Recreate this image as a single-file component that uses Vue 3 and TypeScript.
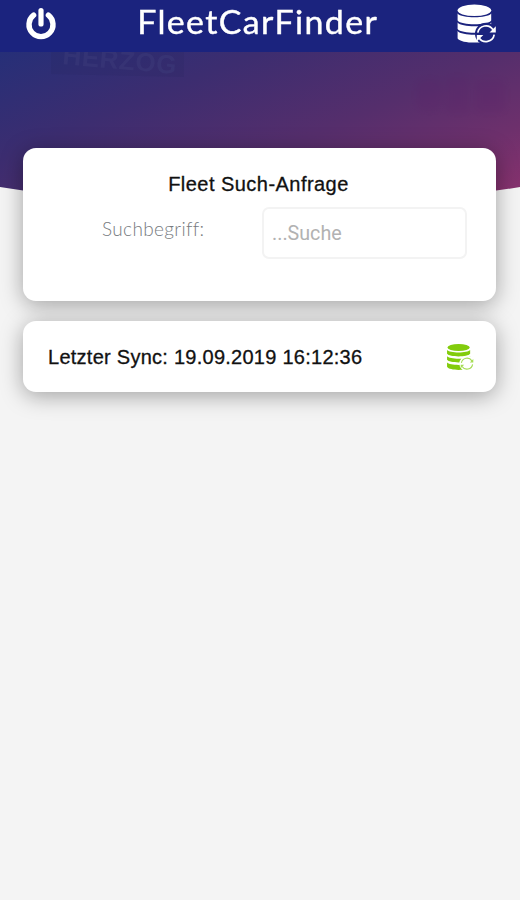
<script setup lang="ts">
import { ref } from 'vue'

const query = ref('')
const lastSync = '19.09.2019 16:12:36'
</script>

<template>
  <div class="screen">
    <header class="bar">
      <button class="icon-btn" aria-label="Abmelden">
        <svg class="power" viewBox="0 0 32 34" fill="none" stroke="#fff" stroke-linecap="round">
          <path d="M16 4.5V18" stroke-width="5.2" />
          <path d="M8.6 9.2A12 12 0 1 0 23.4 9.2" stroke-width="5.4" />
        </svg>
      </button>
      <h1 class="title">FleetCarFinder</h1>
      <button class="icon-btn" aria-label="Synchronisieren">
        <svg class="db" viewBox="0 0 40 40">
          <g fill="#fff">
            <ellipse cx="17.4" cy="6.3" rx="16.8" ry="5.8" />
            <path d="M.6 9.6C4.4 14.6 30.4 14.6 34.2 9.6V16.4C30.4 21.4 4.4 21.4 .6 16.4Z" />
            <path d="M.6 18.5C4.4 23.5 30.4 23.5 34.2 18.5V25C30.4 30 4.4 30 .6 25Z" />
            <path d="M.6 27C4.4 32 30.4 32 34.2 27V34.4C30.4 40 4.4 40 .6 34.4Z" />
          </g>
          <circle cx="29" cy="29.7" r="11" fill="#1b237e" />
          <g fill="none" stroke="#fff" stroke-width="1.7">
            <path d="M20.8 28.7A8.3 8.3 0 0 1 36 25.7M37.2 30.7A8.3 8.3 0 0 1 22 33.7" />
          </g>
          <path d="M38.8 22.2V28.5H32.5ZM19.8 37.5V31H26.3Z" fill="#fff" />
        </svg>
      </button>
    </header>

    <div class="hero">
      <svg class="hero-art" viewBox="0 0 520 160" preserveAspectRatio="none">
        <defs>
          <linearGradient id="sky" gradientUnits="userSpaceOnUse" x1="0" y1="0" x2="126" y2="302">
            <stop offset="0" stop-color="#262f78" />
            <stop offset=".3" stop-color="#3c2d70" />
            <stop offset=".6" stop-color="#552e6c" />
            <stop offset=".82" stop-color="#6d306c" />
            <stop offset="1" stop-color="#87326e" />
          </linearGradient>
          <clipPath id="curve"><path d="M0 0H520V135Q260 177 0 135Z" /></clipPath>
        </defs>
        <g clip-path="url(#curve)">
          <rect width="520" height="160" fill="url(#sky)" />
          <path d="M51 0H184V25L51 22Z" fill="#26255f" opacity=".18" />
          <text class="sign" x="62" y="12" transform="rotate(5 62 12)" textLength="114">HERZOG</text>
          <g class="smudge">
            <rect x="417" y="28" width="25" height="30" rx="8" />
            <rect x="447" y="26" width="22" height="34" rx="4" />
            <rect x="475" y="28" width="30" height="32" rx="5" />
          </g>
        </g>
      </svg>
    </div>

    <main class="cards">
      <section class="card search">
        <h2>Fleet Such-Anfrage</h2>
        <div class="field">
          <label for="q">Suchbegriff:</label>
          <input id="q" v-model="query" type="text" placeholder="...Suche" />
        </div>
      </section>
      <section class="card sync">
        <span class="sync-text">Letzter Sync: {{ lastSync }}</span>
        <svg class="db-small" viewBox="0 0 40 40">
          <g fill="#82cc0c">
            <ellipse cx="18" cy="6.3" rx="16" ry="5" />
            <path d="M1.5 10C5 14.6 31 14.6 34.5 10V15.5C31 20.5 5 20.5 1.5 15.5Z" />
            <path d="M1.5 19C5 23.6 31 23.6 34.5 19V24C31 29 5 29 1.5 24Z" />
            <path d="M1.5 28C5 32.5 31 32.5 34.5 28V34C31 40 5 40 1.5 34Z" />
          </g>
          <circle cx="30" cy="29.5" r="11" fill="#fff" />
          <g fill="none" stroke="#a5dc55" stroke-width="1.6">
            <path d="M22 28.5A8.2 8.2 0 0 1 37 25.5M38 30.5A8.2 8.2 0 0 1 23 33.5" />
          </g>
          <path d="M39 23V28H34ZM21 36V31H26Z" fill="#a5dc55" />
        </svg>
      </section>
    </main>
  </div>
</template>

<style>
body {
  background: #f4f4f4;
}
</style>

<style scoped>
.screen {
  min-height: 900px;
  background: #f4f4f4;
  font-family: "Liberation Sans", sans-serif;
  overflow: hidden;
}
.bar {
  box-sizing: border-box;
  height: 52px;
  padding: 0 23px 0 25px;
  display: flex;
  align-items: flex-start;
  justify-content: space-between;
  background: #1b237e;
}
.icon-btn {
  padding: 0;
  border: 0;
  background: none;
  display: flex;
}
.power {
  width: 32px;
  height: 34px;
  margin-top: 6px;
}
.db {
  width: 40px;
  height: 40px;
  margin-top: 4px;
}
.title {
  margin: 0 0 0 1px;
  font: 400 32px/44px Lato, sans-serif;
  letter-spacing: 1.3px;
  color: #fff;
  -webkit-text-stroke: 0.4px #fff;
  transform: scaleX(1.06);
}
.hero {
  height: 96px;
}
.hero-art {
  display: block;
  width: 520px;
  height: 160px;
}
.sign {
  font: 700 26px "Liberation Sans", sans-serif;
  fill: #41407e;
  opacity: 0.38;
}
.smudge {
  fill: #5a2068;
  opacity: 0.2;
  filter: blur(3px);
}
.cards {
  position: relative;
  display: flex;
  flex-direction: column;
  gap: 20px;
  padding: 0 24px 0 23px;
}
.card {
  box-sizing: border-box;
  border-radius: 13px;
  background: #fff;
  box-shadow: 0 4px 22px rgba(0, 0, 0, 0.34);
}
.search {
  height: 153px;
  padding: 24px 29px 0 79px;
}
.search h2 {
  margin: 0 2px 0 -50px;
  font-size: 20px;
  line-height: 24px;
  font-weight: 400;
  letter-spacing: 0.46px;
  text-align: center;
  color: #111;
  -webkit-text-stroke: 0.3px #111;
}
.field {
  display: flex;
  justify-content: space-between;
  margin-top: 11px;
}
.field label {
  margin-top: 9px;
  font: 300 19px/26px Lato, sans-serif;
  letter-spacing: 0.35px;
  color: #777b80;
}
.field input {
  box-sizing: border-box;
  width: 205px;
  height: 52px;
  padding: 0 8px;
  border: 2px solid #f3f3f3;
  border-radius: 7px;
  background: #fff;
  outline: 0;
  font: 400 19.7px Roboto, sans-serif;
}
.field input::placeholder {
  color: #b2b2b2;
}
.sync {
  height: 71px;
  padding: 0 22px 0 25px;
  display: flex;
  align-items: center;
  justify-content: space-between;
}
.sync-text {
  padding-top: 2px;
  font-size: 20px;
  letter-spacing: 0.26px;
  color: #111;
  -webkit-text-stroke: 0.3px #111;
}
.db-small {
  width: 28px;
  height: 28px;
}
</style>
